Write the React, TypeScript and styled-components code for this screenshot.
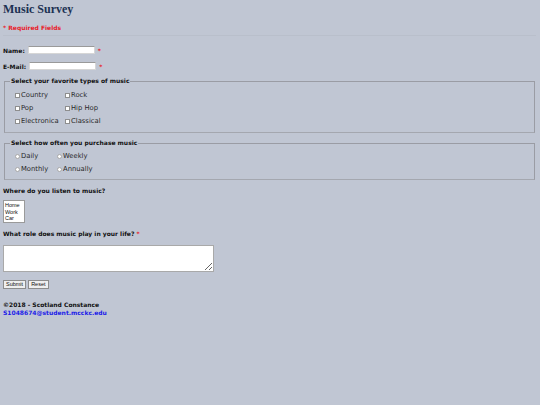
import styled, { createGlobalStyle } from 'styled-components';

const GlobalStyle = createGlobalStyle`
  html, body {
    margin: 0;
    padding: 0;
    background: #c0c6d3;
  }
  body {
    font-family: "DejaVu Sans", Verdana, sans-serif;
    font-size: 6px;
    color: #111;
  }
`;

const musicTypes = [
  ['Country', 'Rock'],
  ['Pop', 'Hip Hop'],
  ['Electronica', 'Classical'],
];

const frequencies = [
  ['Daily', 'Weekly'],
  ['Monthly', 'Annually'],
];

function App() {
  return (
    <Page>
      <GlobalStyle />
      <Title>Music Survey</Title>
      <Required>* Required Fields</Required>
      <Form>
        <FieldRow>
          <Label>Name:</Label>
          <TextInput type="text" />
          <Star>*</Star>
        </FieldRow>
        <FieldRow>
          <Label>E-Mail:</Label>
          <TextInput type="text" />
          <Star>*</Star>
        </FieldRow>

        <Group $height={56} $top={6}>
          <Legend>Select your favorite types of music</Legend>
          <Options $col={50} $top={4}>
            {musicTypes.flat().map((t) => (
              <Option key={t}>
                <Box />
                {t}
              </Option>
            ))}
          </Options>
        </Group>

        <Group $height={41} $top={6}>
          <Legend>Select how often you purchase music</Legend>
          <Options $col={42} $top={3}>
            {frequencies.flat().map((t) => (
              <Option key={t}>
                <Radio />
                {t}
              </Option>
            ))}
          </Options>
        </Group>

        <Question $top={7}>Where do you listen to music?</Question>
        <ListBox>
          <div>Home</div>
          <div>Work</div>
          <div>Car</div>
        </ListBox>

        <Question $top={7}>
          What role does music play in your life? <Mark>*</Mark>
        </Question>
        <TextArea />

        <Buttons>
          <Button type="button">Submit</Button>
          <Button type="button">Reset</Button>
        </Buttons>
      </Form>
      <Footer>
        <div>©2018 - Scotland Constance</div>
        <Mail href="#">S1048674@student.mcckc.edu</Mail>
      </Footer>
    </Page>
  );
}

const Page = styled.div`
  padding: 0 4px 0 3px;
`;

const Title = styled.h1`
  margin: 0;
  padding-top: 1px;
  font-family: "Liberation Serif", "Times New Roman", serif;
  font-size: 12px;
  line-height: 16px;
  font-weight: 700;
  color: #1c3152;
`;

const Required = styled.div`
  margin-top: 7px;
  padding-bottom: 3px;
  font-weight: 700;
  line-height: 8px;
  color: #e8202a;
  border-bottom: 1px solid #b9bfcb;
`;

const Form = styled.form`
  margin: 0;
`;

const FieldRow = styled.div`
  display: flex;
  align-items: center;
  height: 10px;
  margin-top: 9px;
  & + & {
    margin-top: 6px;
  }
`;

const Label = styled.span`
  font-weight: 700;
  margin-right: 3px;
`;

const TextInput = styled.input`
  box-sizing: border-box;
  width: 67px;
  height: 8px;
  padding: 0;
  border: 1px solid #d6d6d6;
  border-top-color: #9a9a9a;
  background: #fff;
`;

const Star = styled.span`
  color: #e8202a;
  font-weight: 700;
  margin-left: 3px;
`;

const Mark = styled.span`
  color: #e8202a;
  font-weight: 700;
`;

const Group = styled.fieldset<{ $height: number; $top: number }>`
  box-sizing: border-box;
  height: ${({ $height }) => $height}px;
  margin: ${({ $top }) => $top}px 1px 0 1px;
  padding: 2px 0 0 10px;
  border: 1px solid #9a9ca4;
  border-bottom-color: #a4a7af;
`;

const Legend = styled.legend`
  padding: 0 1px;
  margin-left: -5px;
  font-weight: 700;
  line-height: 8px;
`;

const Options = styled.div<{ $col: number; $top: number }>`
  display: grid;
  grid-template-columns: ${({ $col }) => $col}px auto;
  row-gap: 5px;
  margin-top: ${({ $top }) => $top}px;
`;

const Option = styled.label`
  display: flex;
  align-items: center;
  height: 8px;
  font-size: 6.8px;
  color: #2a2a2a;
`;

const Box = styled.span`
  box-sizing: border-box;
  width: 5px;
  height: 5px;
  margin-right: 1px;
  border: 1px solid #8e8e8e;
  background: #fff;
`;

const Radio = styled(Box)`
  border-radius: 50%;
  border-color: #a8a8a8;
`;

const Question = styled.div<{ $top: number }>`
  margin-top: ${({ $top }) => $top}px;
  font-weight: 700;
  line-height: 8px;
`;

const ListBox = styled.div`
  box-sizing: border-box;
  width: 22px;
  height: 23px;
  margin-top: 5px;
  padding: 1px 1px;
  border: 1px solid #9a9a9a;
  background: #fff;
  font-family: "Liberation Sans", Arial, sans-serif;
  font-size: 5.5px;
  line-height: 6.6px;
`;

const TextArea = styled.textarea`
  display: block;
  box-sizing: border-box;
  width: 211px;
  height: 27px;
  margin-top: 7px;
  border: 1px solid #a9a9a9;
  background: #fff;
  resize: both;
`;

const Buttons = styled.div`
  display: flex;
  gap: 2px;
  margin-top: 8px;
`;

const Button = styled.button`
  box-sizing: border-box;
  height: 9px;
  padding: 0 2px;
  border: 1px solid #8c8c8c;
  background: #efefef;
  font-family: "Liberation Sans", Arial, sans-serif;
  font-size: 5.5px;
  line-height: 7px;
  color: #111;
`;

const Footer = styled.footer`
  margin-top: 12px;
  font-weight: 700;
  line-height: 7.5px;
`;

const Mail = styled.a`
  color: #1b1be8;
  text-decoration: underline;
`;

export default App;
